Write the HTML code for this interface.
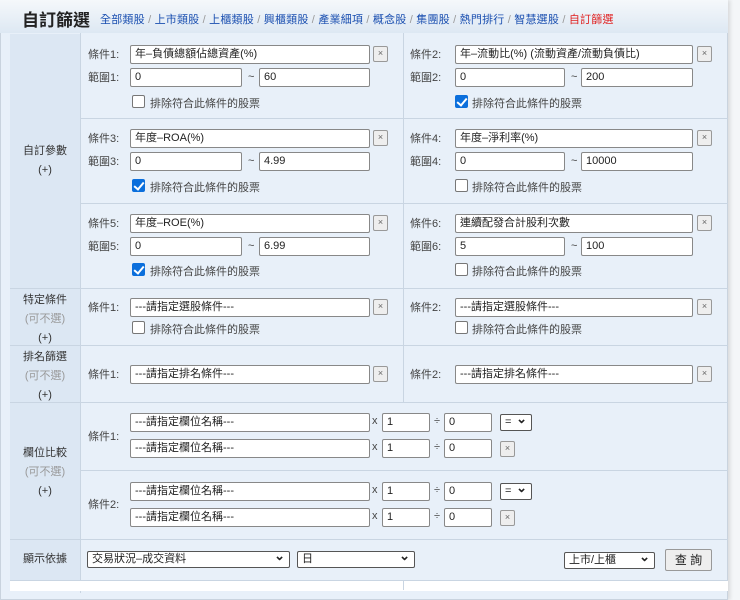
<!DOCTYPE html>
<html><head><meta charset="utf-8"><style>
*{box-sizing:border-box;margin:0;padding:0}
body{width:740px;height:585px;overflow:hidden;background:#f4f6f8;font-family:"Liberation Sans","Noto Sans CJK TC",sans-serif;font-size:11px;color:#333;position:relative}
.card{position:absolute;left:0;top:0;width:728px;height:600px;background:#e8f0f9;border:1px solid #c9d3de;border-top:none;box-shadow:2px 0 4px rgba(0,0,0,.12)}
.hdr{position:absolute;left:0;top:0;width:728px;height:33px;background:linear-gradient(#f5f8fb,#dde8f3);}
.title{position:absolute;left:22px;top:6px;font-size:17px;font-weight:bold;color:#222}
.links{position:absolute;left:100px;top:11px;font-size:11px;color:#1a4fb0;white-space:nowrap;letter-spacing:0.2px}
.links span{color:#999}
.links b{color:#e02020;font-weight:normal}
.a{position:absolute}
.lc{position:absolute;left:10px;width:70px;background:#dce7f3;text-align:center;color:#333;line-height:19px}
.lc i{font-style:normal;color:#999}
.hl{position:absolute;height:1px;background:#c9d5e2}
.vl{position:absolute;width:1px;background:#c9d5e2}
.in{position:absolute;height:19px;background:#fff;border:1px solid #888;border-radius:2px;padding-left:4px;line-height:17px;font-size:11px;color:#222;white-space:nowrap;overflow:hidden}
.x{position:absolute;width:15px;height:16px;border:1px solid #999;border-radius:2px;background:#eee;color:#666;font-size:9px;text-align:center;line-height:13px}
.cb{position:absolute;width:13px;height:13px;border:1px solid #777;border-radius:2px;background:#fff}
.cb.on{background:#0b6fdc;border-color:#0b6fdc}
.cb.on:after{content:"";position:absolute;left:3px;top:0px;width:4px;height:8px;border:solid #fff;border-width:0 2px 2px 0;transform:rotate(40deg)}
.lb{position:absolute;color:#444}
.sel{position:absolute;height:17px;background:#fff;border:1px solid #555;border-radius:2px;padding-left:4px;line-height:15px;color:#222}
.sel:after{content:"⌄";position:absolute;right:4px;top:-4px;font-size:13px;font-weight:bold}
.btn{position:absolute;border:1px solid #999;border-radius:2px;background:#eee;text-align:center;color:#222;font-size:12px}
</style></head><body>
<div class="card"></div>
<div class="hdr"></div>
<div class="title">自訂篩選</div>
<div class="links">全部類股 <span>/</span> 上市類股 <span>/</span> 上櫃類股 <span>/</span> 興櫃類股 <span>/</span> 產業細項 <span>/</span> 概念股 <span>/</span> 集團股 <span>/</span> 熱門排行 <span>/</span> 智慧選股 <span>/</span> <b>自訂篩選</b></div>

<div class="lc" style="top:34px;height:254px;padding-top:108px">自訂參數<br>(+)</div>
<div class="lc" style="top:288px;height:57px;padding-top:3px">特定條件<br><i>(可不選)</i><br>(+)</div>
<div class="lc" style="top:345px;height:57px;padding-top:3px">排名篩選<br><i>(可不選)</i><br>(+)</div>
<div class="lc" style="top:402px;height:137px;padding-top:42px">欄位比較<br><i>(可不選)</i><br>(+)</div>
<div class="lc" style="top:539px;height:41px;padding-top:11px">顯示依據</div>

<div class="vl" style="left:80px;top:33px;height:560px"></div>
<div class="vl" style="left:403px;top:33px;height:369px"></div>
<div class="hl" style="left:80px;top:118px;width:648px"></div>
<div class="hl" style="left:80px;top:203px;width:648px"></div>
<div class="hl" style="left:10px;top:288px;width:718px"></div>
<div class="hl" style="left:10px;top:345px;width:718px"></div>
<div class="hl" style="left:10px;top:402px;width:718px"></div>
<div class="hl" style="left:80px;top:470px;width:648px"></div>
<div class="hl" style="left:10px;top:539px;width:718px"></div>
<div class="hl" style="left:10px;top:580px;width:718px"></div>
<div class="a" style="left:10px;top:581px;width:718px;height:10px;background:#fff"></div>
<div class="vl" style="left:403px;top:580px;height:10px"></div>

<div class="lb" style="left:88px;top:46px">條件1:</div><div class="in" style="left:130px;top:45px;width:240px">年–負債總額佔總資產(%)</div><div class="x" style="left:373px;top:46px">×</div>
<div class="lb" style="left:88px;top:69px">範圍1:</div><div class="in" style="left:130px;top:68px;width:112px">0</div><div class="lb" style="left:248px;top:71px">~</div><div class="in" style="left:259px;top:68px;width:111px">60</div>
<div class="cb" style="left:132px;top:95px"></div><div class="lb" style="left:150px;top:95px">排除符合此條件的股票</div>
<div class="lb" style="left:410px;top:46px">條件2:</div><div class="in" style="left:455px;top:45px;width:238px">年–流動比(%) (流動資產/流動負債比)</div><div class="x" style="left:697px;top:46px">×</div>
<div class="lb" style="left:410px;top:69px">範圍2:</div><div class="in" style="left:455px;top:68px;width:110px">0</div><div class="lb" style="left:571px;top:71px">~</div><div class="in" style="left:581px;top:68px;width:112px">200</div>
<div class="cb on" style="left:455px;top:95px"></div><div class="lb" style="left:472px;top:95px">排除符合此條件的股票</div>

<div class="lb" style="left:88px;top:130px">條件3:</div><div class="in" style="left:130px;top:129px;width:240px">年度–ROA(%)</div><div class="x" style="left:373px;top:130px">×</div>
<div class="lb" style="left:88px;top:153px">範圍3:</div><div class="in" style="left:130px;top:152px;width:112px">0</div><div class="lb" style="left:248px;top:155px">~</div><div class="in" style="left:259px;top:152px;width:111px">4.99</div>
<div class="cb on" style="left:132px;top:179px"></div><div class="lb" style="left:150px;top:179px">排除符合此條件的股票</div>
<div class="lb" style="left:410px;top:130px">條件4:</div><div class="in" style="left:455px;top:129px;width:238px">年度–淨利率(%)</div><div class="x" style="left:697px;top:130px">×</div>
<div class="lb" style="left:410px;top:153px">範圍4:</div><div class="in" style="left:455px;top:152px;width:110px">0</div><div class="lb" style="left:571px;top:155px">~</div><div class="in" style="left:581px;top:152px;width:112px">10000</div>
<div class="cb" style="left:455px;top:179px"></div><div class="lb" style="left:472px;top:179px">排除符合此條件的股票</div>

<div class="lb" style="left:88px;top:215px">條件5:</div><div class="in" style="left:130px;top:214px;width:240px">年度–ROE(%)</div><div class="x" style="left:373px;top:215px">×</div>
<div class="lb" style="left:88px;top:238px">範圍5:</div><div class="in" style="left:130px;top:237px;width:112px">0</div><div class="lb" style="left:248px;top:240px">~</div><div class="in" style="left:259px;top:237px;width:111px">6.99</div>
<div class="cb on" style="left:132px;top:263px"></div><div class="lb" style="left:150px;top:263px">排除符合此條件的股票</div>
<div class="lb" style="left:410px;top:215px">條件6:</div><div class="in" style="left:455px;top:214px;width:238px">連續配發合計股利次數</div><div class="x" style="left:697px;top:215px">×</div>
<div class="lb" style="left:410px;top:238px">範圍6:</div><div class="in" style="left:455px;top:237px;width:110px">5</div><div class="lb" style="left:571px;top:240px">~</div><div class="in" style="left:581px;top:237px;width:112px">100</div>
<div class="cb" style="left:455px;top:263px"></div><div class="lb" style="left:472px;top:263px">排除符合此條件的股票</div>

<div class="lb" style="left:88px;top:299px">條件1:</div><div class="in" style="left:130px;top:298px;width:240px">---請指定選股條件---</div><div class="x" style="left:373px;top:299px">×</div>
<div class="cb" style="left:132px;top:321px"></div><div class="lb" style="left:150px;top:321px">排除符合此條件的股票</div>
<div class="lb" style="left:410px;top:299px">條件2:</div><div class="in" style="left:455px;top:298px;width:238px">---請指定選股條件---</div><div class="x" style="left:697px;top:299px">×</div>
<div class="cb" style="left:455px;top:321px"></div><div class="lb" style="left:472px;top:321px">排除符合此條件的股票</div>

<div class="lb" style="left:88px;top:366px">條件1:</div><div class="in" style="left:130px;top:365px;width:240px">---請指定排名條件---</div><div class="x" style="left:373px;top:366px">×</div>
<div class="lb" style="left:410px;top:366px">條件2:</div><div class="in" style="left:455px;top:365px;width:238px">---請指定排名條件---</div><div class="x" style="left:697px;top:366px">×</div>

<div class="lb" style="left:88px;top:428px">條件1:</div>
<div class="in" style="left:130px;top:413px;width:240px">---請指定欄位名稱---</div><div class="lb" style="left:372px;top:415px">x</div><div class="in" style="left:382px;top:413px;width:48px">1</div><div class="lb" style="left:434px;top:415px">÷</div><div class="in" style="left:444px;top:413px;width:48px">0</div><div class="sel" style="left:500px;top:414px;width:32px">=</div>
<div class="in" style="left:130px;top:439px;width:240px">---請指定欄位名稱---</div><div class="lb" style="left:372px;top:441px">x</div><div class="in" style="left:382px;top:439px;width:48px">1</div><div class="lb" style="left:434px;top:441px">÷</div><div class="in" style="left:444px;top:439px;width:48px">0</div><div class="x" style="left:500px;top:441px">×</div>
<div class="lb" style="left:88px;top:496px">條件2:</div>
<div class="in" style="left:130px;top:482px;width:240px">---請指定欄位名稱---</div><div class="lb" style="left:372px;top:484px">x</div><div class="in" style="left:382px;top:482px;width:48px">1</div><div class="lb" style="left:434px;top:484px">÷</div><div class="in" style="left:444px;top:482px;width:48px">0</div><div class="sel" style="left:500px;top:483px;width:32px">=</div>
<div class="in" style="left:130px;top:508px;width:240px">---請指定欄位名稱---</div><div class="lb" style="left:372px;top:510px">x</div><div class="in" style="left:382px;top:508px;width:48px">1</div><div class="lb" style="left:434px;top:510px">÷</div><div class="in" style="left:444px;top:508px;width:48px">0</div><div class="x" style="left:500px;top:510px">×</div>

<div class="sel" style="left:87px;top:551px;width:203px">交易狀況–成交資料</div>
<div class="sel" style="left:297px;top:551px;width:118px">日</div>
<div class="sel" style="left:564px;top:552px;width:91px">上市/上櫃</div>
<div class="btn" style="left:665px;top:549px;width:47px;height:22px;line-height:20px">查 詢</div>
</body></html>
